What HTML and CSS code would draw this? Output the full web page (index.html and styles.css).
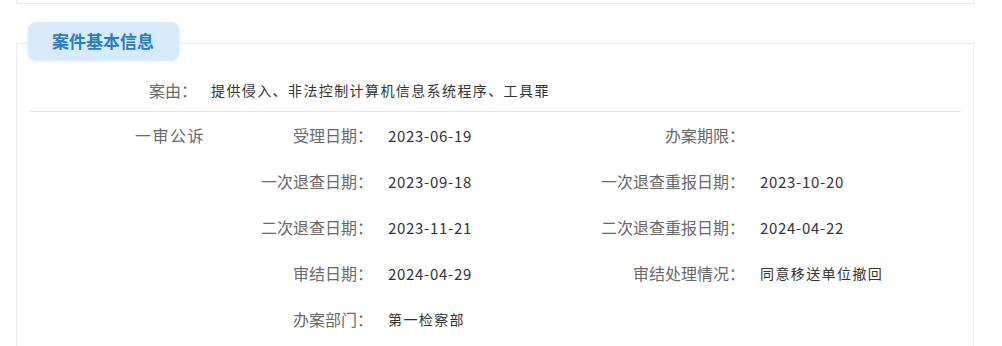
FILE: index.html
```html
<!DOCTYPE html>
<html lang="zh-CN">

<head>
    <meta charset="UTF-8">
    <meta name="viewport" content="width=device-width, initial-scale=1.0">
    <title>案件基本信息</title>
    <link rel="stylesheet" href="styles.css">
</head>

<body>
    <div class="prev-card"></div>

    <div class="section">
        <div class="badge">案件基本信息</div>
        <div class="card">
            <div class="cause-row">
                <span class="cause-label">案由：</span>
                <span class="value text">提供侵入、非法控制计算机信息系统程序、工具罪</span>
            </div>

            <div class="info-grid">
                <div class="stage">一审公诉</div>
                <div class="label">受理日期：</div>
                <div class="value">2023-06-19</div>
                <div class="label">办案期限：</div>
                <div class="value"></div>

                <div class="stage"></div>
                <div class="label">一次退查日期：</div>
                <div class="value">2023-09-18</div>
                <div class="label">一次退查重报日期：</div>
                <div class="value">2023-10-20</div>

                <div class="stage"></div>
                <div class="label">二次退查日期：</div>
                <div class="value">2023-11-21</div>
                <div class="label">二次退查重报日期：</div>
                <div class="value">2024-04-22</div>

                <div class="stage"></div>
                <div class="label">审结日期：</div>
                <div class="value">2024-04-29</div>
                <div class="label">审结处理情况：</div>
                <div class="value text">同意移送单位撤回</div>

                <div class="stage"></div>
                <div class="label">办案部门：</div>
                <div class="value text">第一检察部</div>
                <div class="label"></div>
                <div class="value"></div>
            </div>
        </div>
    </div>
</body>

</html>
```

FILE: styles.css
```css
body {
    margin: 0;
    background-color: #fff;
    font-family: "Noto Sans CJK SC", "Noto Sans", sans-serif;
    color: #333;
    overflow: hidden;
}

.prev-card {
    height: 3px;
    margin: 0 28px 0 16px;
    border: 1px solid #e8e8e8;
    border-top: none;
}

.section {
    margin: 18px 28px 0 16px;
}

.badge {
    position: relative;
    z-index: 1;
    display: inline-block;
    margin-left: 12px;
    padding: 0 25px 0 24px;
    height: 38px;
    line-height: 38px;
    font-size: 17px;
    font-weight: bold;
    color: #2b7cbe;
    background-color: #d5ebfb;
    border-radius: 8px;
    box-shadow: 0 1px 3px rgba(80, 150, 210, 0.25);
}

.card {
    margin-top: -17px;
    height: 320px;
    border: 1px solid #ebebeb;
    border-bottom: none;
}

.cause-row {
    display: flex;
    align-items: center;
    height: 42px;
    margin: 25px 12px 0 13px;
    border-bottom: 1px solid #e6e6e6;
}

.cause-label {
    width: 167px;
    text-align: right;
    font-size: 16px;
    color: #686868;
}

.cause-row .value {
    padding-left: 14px;
}

.info-grid {
    display: grid;
    grid-template-columns: 188px 168px 205px 167px 1fr;
    grid-auto-rows: 46px;
    align-items: center;
}

.stage {
    text-align: right;
    font-size: 16px;
    letter-spacing: 1.5px;
    color: #686868;
}

.label {
    text-align: right;
    font-size: 16px;
    color: #686868;
    white-space: nowrap;
}

.value {
    padding-left: 15px;
    font-size: 15px;
    letter-spacing: 0.7px;
    color: #333;
    white-space: nowrap;
}

.value.text {
    font-size: 14px;
    letter-spacing: 1.4px;
}
```
